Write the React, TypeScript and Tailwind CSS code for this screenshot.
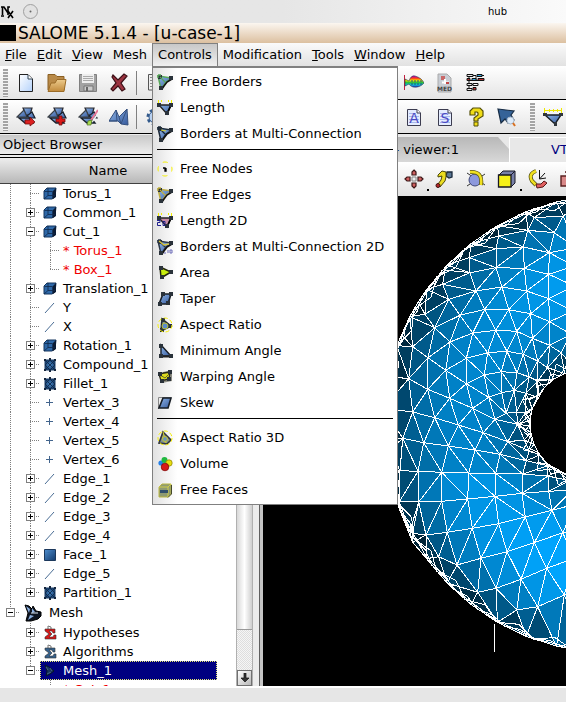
import React from "react";

type P = [number, number];
type IconProps = { size?: number; children?: React.ReactNode };

function Icon({ size = 16, children }: IconProps) {
  return (
    <svg width={size} height={size} viewBox={`0 0 ${size} ${size}`} className="shrink-0" aria-hidden="true">
      {children}
    </svg>
  );
}

function Gradients() {
  return (
    <svg width="0" height="0" className="absolute" aria-hidden="true">
      <defs>
        <linearGradient id="blue" x1="0" y1="0" x2="1" y2="1">
          <stop offset="0" stopColor="#8fb6e8" />
          <stop offset="1" stopColor="#35599c" />
        </linearGradient>
        <linearGradient id="deep" x1="0" y1="0" x2="1" y2="1">
          <stop offset="0" stopColor="#4f8fd0" />
          <stop offset="1" stopColor="#123a6c" />
        </linearGradient>
        <radialGradient id="ball">
          <stop offset="0" stopColor="#4a8ccc" />
          <stop offset="1" stopColor="#173e6c" />
        </radialGradient>
        <linearGradient id="page" x1="0" y1="0" x2="1" y2="1">
          <stop offset="0" stopColor="#ffffff" />
          <stop offset="1" stopColor="#b4d2fb" />
        </linearGradient>
        <linearGradient id="folder" x1="0" y1="0" x2="0" y2="1">
          <stop offset="0" stopColor="#edcb8c" />
          <stop offset="1" stopColor="#c18a3c" />
        </linearGradient>
        <linearGradient id="rainbow" x1="0" y1="0" x2="0" y2="1">
          <stop offset="0" stopColor="#b000d0" />
          <stop offset="0.2" stopColor="#ff3020" />
          <stop offset="0.4" stopColor="#f0e000" />
          <stop offset="0.6" stopColor="#20c040" />
          <stop offset="0.8" stopColor="#10c0e0" />
          <stop offset="1" stopColor="#2020c0" />
        </linearGradient>
      </defs>
    </svg>
  );
}

/* ---------- icons of the Controls menu ---------- */

function Nodes({ at }: { at: P[] }) {
  return (
    <>
      {at.map(([x, y]) => (
        <rect key={`${x}-${y}`} x={x - 2} y={y - 2} width="4" height="4" fill="#2a323a" />
      ))}
    </>
  );
}

function Corner({ edge, mark }: { edge: string; mark?: React.ReactNode }) {
  return (
    <Icon>
      <path d="M1 2L15 4L9 8L7 11L4 15Z" fill="url(#blue)" stroke={edge} strokeWidth="1.5" />
      <path d="M15 5L10 8L7 12L5 15" fill="none" stroke="#111" strokeWidth="1.6" />
      <Nodes at={[[3, 3], [14, 4], [4, 14]]} />
      <path d="M1 1H4M1 1V4M3 3L8 8" fill="none" stroke={edge} strokeWidth="1.3" />
      {mark}
    </Icon>
  );
}

function LengthIcon({ fill = "url(#blue)", mark }: { fill?: string; mark?: React.ReactNode }) {
  return (
    <Icon>
      <path d="M2 5H14L10 14Z" fill={fill} stroke="#222" strokeWidth="1.4" />
      <path d="M14 5L10 14" stroke="#000" strokeWidth="1.8" />
      <path d="M1.500 0V3M4.500 0V2M11.500 0V2M14.500 0V3" stroke="#f4f000" />
      <Nodes at={[[2, 5], [14, 5], [10, 13]]} />
      {mark}
    </Icon>
  );
}

const twoD = <path d="M0 7.500H3V9.500H0.500V12.500H4M6 8.500H8V12.500H6Z" fill="none" stroke="#20208c" />;
const twoDSmall = <path d="M7 14H9M11 11V14M13 11H15V14H13Z" fill="none" stroke="#6a6ab8" />;
const Halo = () => <circle cx="8" cy="8" r="7" fill="none" stroke="#f6f000" strokeDasharray="4 2.300" />;

const icons = {
  freeBorders: <Corner edge="#58a858" />,
  length: <LengthIcon />,
  multi: <Corner edge="#1b2836" mark={<path d="M4 4L9 5" stroke="#d8d030" />} />,
  freeNodes: (
    <Icon>
      <circle cx="8" cy="8" r="7" fill="none" stroke="#f6f000" strokeDasharray="5 6" strokeDashoffset="2.500" />
      <path d="M6 7H8V10H9V7" fill="none" stroke="#000" strokeWidth="1.3" />
    </Icon>
  ),
  freeEdges: <Corner edge="#c0ae40" />,
  length2d: <LengthIcon fill="#c58ba5" mark={twoD} />,
  multi2d: <Corner edge="#2b3646" mark={<>{twoDSmall}<path d="M2 2L7 6L12 5" stroke="#d8c840" fill="none" strokeWidth="1.3" /></>} />,
  area: (
    <Icon>
      <path d="M3 2L14 7L4 13Z" fill="#c8ee10" stroke="#20240a" strokeWidth="1.5" />
      <Nodes at={[[4, 3], [14, 7], [5, 12]]} />
    </Icon>
  ),
  taper: (
    <Icon>
      <path d="M6 3H14L11 13H2Z" fill="url(#blue)" stroke="#161c24" strokeWidth="1.6" />
      <Nodes at={[[6, 3], [14, 3], [11, 12], [3, 13]]} />
    </Icon>
  ),
  aspect: (
    <Icon>
      <path d="M5 2L14 9L4 14Z" fill="#87929a" stroke="#20262c" strokeWidth="1.6" />
      <Nodes at={[[6, 3], [13, 9], [5, 13]]} />
      <circle cx="8" cy="9" r="3" fill="#5b8bcb" stroke="#b9bd30" />
      <Halo />
    </Icon>
  ),
  angle: (
    <Icon>
      <path d="M4 2L14 13H4Z" fill="url(#blue)" stroke="#161c24" strokeWidth="1.4" />
      <path d="M2 13.500H15" stroke="#222" strokeWidth="2" />
      <Nodes at={[[4, 3], [4, 13], [14, 13]]} />
    </Icon>
  ),
  warping: (
    <Icon>
      <path d="M6 3L15 1V12L5 14Z" fill="#8d8d84" />
      <path d="M2 5L7 4L13 3L12 10L4 12Z" fill="#dddb20" stroke="#282818" strokeWidth="1.3" />
      <path d="M3 6L8 9M8 9L13 4" fill="none" stroke="#6a6a20" />
      <Nodes at={[[3, 5], [13, 3], [12, 10], [5, 12]]} />
    </Icon>
  ),
  skew: (
    <Icon>
      <path d="M1.500 14V2.500H14" fill="none" stroke="#888" />
      <path d="M6 3H14L11 13H2Z" fill="url(#blue)" stroke="#161c24" strokeWidth="1.6" />
    </Icon>
  ),
  aspect3d: (
    <Icon>
      <path d="M6 2L14 10L10 14L2 13Z" fill="#7f8f93" stroke="#30343a" strokeWidth="1.6" />
      <path d="M6 2L9 13M5 7L10 9" fill="none" stroke="#d4d020" />
      <circle cx="8" cy="9" r="2.5" fill="#6c97ba" stroke="#c8c430" />
      <Halo />
    </Icon>
  ),
  volume: (
    <Icon>
      <circle cx="4" cy="7" r="2.6" fill="#2580e8" />
      <circle cx="7.5" cy="4" r="3" fill="#20b840" />
      <circle cx="12" cy="7" r="3.2" fill="#e8dc10" stroke="#8a8200" strokeWidth="0.7" />
      <circle cx="8" cy="11" r="3.8" fill="#d81818" stroke="#700" strokeWidth="0.7" />
    </Icon>
  ),
  freeFaces: (
    <Icon>
      <path d="M2 5L5 2H14V12L11 15H2Z" fill="#8e9a72" stroke="#b8b440" />
      <path d="M2 5H11V15M11 5L14 2" fill="none" stroke="#d0cc48" />
      <path d="M3 8H11V11H3Z" fill="#31506c" />
      <path d="M14.500 3V12L11 15.500" fill="none" stroke="#44482a" />
    </Icon>
  ),
};

const menuGroups: { label: string; icon: React.ReactNode }[][] = [
  [
    { label: "Free Borders", icon: icons.freeBorders },
    { label: "Length", icon: icons.length },
    { label: "Borders at Multi-Connection", icon: icons.multi },
  ],
  [
    { label: "Free Nodes", icon: icons.freeNodes },
    { label: "Free Edges", icon: icons.freeEdges },
    { label: "Length 2D", icon: icons.length2d },
    { label: "Borders at Multi-Connection 2D", icon: icons.multi2d },
    { label: "Area", icon: icons.area },
    { label: "Taper", icon: icons.taper },
    { label: "Aspect Ratio", icon: icons.aspect },
    { label: "Minimum Angle", icon: icons.angle },
    { label: "Warping Angle", icon: icons.warping },
    { label: "Skew", icon: icons.skew },
  ],
  [
    { label: "Aspect Ratio 3D", icon: icons.aspect3d },
    { label: "Volume", icon: icons.volume },
    { label: "Free Faces", icon: icons.freeFaces },
  ],
];

/* ---------- toolbar icons ---------- */

function MeshShape({ children, plain }: { children?: React.ReactNode; plain?: boolean }) {
  return (
    <Icon size={20}>
      {plain ? (
        <>
          <path d="M0 14L7 3L10 10L18 2L19 18L12 17L9 14Z" fill="url(#blue)" stroke="#35507e" />
          <path d="M7 3L8 14L0 14M10 10L12 17M18 2L12 17" fill="none" stroke="#35507e" />
        </>
      ) : (
        <>
          <path d="M7 1L16 1L14 8L10 8Z" fill="url(#blue)" stroke="#2a2a30" strokeWidth="1.2" />
          <path d="M1 10L8 3L11 10Z" fill="url(#blue)" stroke="#3a4046" strokeWidth="1.2" />
          <path d="M11 9L16 5L19 11L14 11Z" fill="url(#blue)" stroke="#18202c" strokeWidth="1.2" />
          <path d="M3 11L13 11L17 16L9 16Z" fill="url(#blue)" stroke="#18202c" strokeWidth="1.4" />
        </>
      )}
      {children}
    </Icon>
  );
}

function LetterDoc({ letter }: { letter: string }) {
  return (
    <Icon size={20}>
      <path d="M3.500 2.500H13L16.500 6V18.500H3.500Z" fill="#e4ecff" stroke="#3c3c50" />
      <path d="M13 2.500V6H16.500" fill="#fff" stroke="#3c3c50" />
      <path d="M5 6.500H12M5 9.500H15M5 12.500H15M5 15.500H15" stroke="#a8b8ec" />
      <text x="10" y="16" textAnchor="middle" fontSize="14" fontFamily="DejaVu Sans, sans-serif" fill="#4a4ac4">
        {letter}
      </text>
    </Icon>
  );
}

const fileIcons = [
  { name: "New", icon: <Icon size={20}><path d="M3.500 1.500H12L16.500 6V18.500H3.500Z" fill="url(#page)" stroke="#222" /><path d="M12 2V6H16.500" fill="#fff" stroke="#345" /></Icon> },
  { name: "Open", icon: <Icon size={20}><path d="M1 1.500H8L10 3.500H17V17H1Z" fill="#b98a48" stroke="#8a5f22" /><path d="M1 18.500L4 10H8L10 6.500H19L17 18.500Z" fill="url(#folder)" stroke="#9b6c28" /></Icon> },
  { name: "Save", icon: <Icon size={20}><path d="M1.500 1.500H18.500V18.500H1.500Z" fill="#a2a2a2" stroke="#808080" /><path d="M4 1H16V10H4Z" fill="#eee" /><path d="M5 3.500H15M5 5.500H15M5 7.500H15" stroke="#aaa" /><path d="M6 13H15V18H6Z" fill="#ccc" stroke="#777" /><path d="M8 14H10V18H8Z" fill="#666" /></Icon> },
  { name: "Close", icon: <Icon size={20}><path d="M4 2L9 7L15 1L18 3L12 10L16 16L13 18L9 13L4 18L2 16L7 10L3 4Z" fill="#9c3340" stroke="#3c1016" strokeWidth="1.2" /></Icon> },
];

const meshIcons = [
  { name: "Create Mesh", icon: <MeshShape><path d="M9 13H14V10L19 15L14 19V17H9Z" fill="#dc2020" stroke="#701010" strokeWidth="0.8" /></MeshShape> },
  { name: "Create Sub-mesh", icon: <MeshShape><path d="M12 9H15V12H18V15H15V18H12V15H9V12H12Z" fill="#dc1818" stroke="#701010" strokeWidth="0.8" /></MeshShape> },
  { name: "Edit Mesh", icon: <MeshShape><path d="M20 3L13 13" stroke="#e87898" strokeWidth="2" /><path d="M19 8L14 15" stroke="#f4f4f4" strokeWidth="1.5" /><path d="M10 14L14 13L13 18L9 18Z" fill="#a8dc50" stroke="#507020" strokeWidth="0.7" /></MeshShape> },
  { name: "Build Compound", icon: <MeshShape plain /> },
];

const fish = <Icon size={20}><path d="M0.500 2V17" stroke="#c02040" /><path d="M1 6L5 8Q7 2 11 3Q18 5 20 10Q16 15 9 14Q6 13 5 11L1 13Z" fill="url(#rainbow)" stroke="#273b48" strokeWidth="0.6" /><path d="M7 8H18M7 11H18" stroke="#205080" strokeDasharray="2 1" /></Icon>;
const med = <Icon size={20}><path d="M3 1H12L16 5V19H3Z" fill="#c8cdd4" stroke="#aaa" /><path d="M6 3H10V7H6Z" fill="#c86868" /><path d="M7 9.500H14M10 6V11" stroke="#fff" strokeWidth="2" /><path d="M11 9H14V11H11Z" fill="#c04848" /><text x="9.5" y="18" textAnchor="middle" fontSize="6" fontWeight="bold" fontFamily="DejaVu Sans, sans-serif" fill="#444">MED</text></Icon>;
const blocks = <Icon size={20}><path d="M7 2.500H10M16 2.500H18M3 4V17M3 7.500H12M3 11.500H9M10 3V7" stroke="#111" fill="none" /><path d="M1 1.500H7V3.500H1ZM1 10.500H6V12.500H1ZM1 15.500H6V17.500H1Z" fill="#e8e8e8" stroke="#111" /><path d="M11 1.500H16V3.500H11ZM6 5.500H10V7.500H6Z" fill="#38a8e0" stroke="#111" /><path d="M1 5.500H4V7.500H1ZM12 5.500H18V7.500H12ZM7 14.500H10V17H7Z" fill="#bb3030" stroke="#111" /><path d="M7 10.500H12V12.500H7Z" fill="#fff" stroke="#111" /></Icon>;
const help = <Icon size={20}><path d="M4 8V4L7 1H14L17 4V9L12 12V14H8V11L12 8V6L11 5H9V8Z" fill="#f0dc18" stroke="#55500a" strokeWidth="1.2" /><path d="M8 15H12V19H8Z" fill="#f0dc18" stroke="#55500a" /></Icon>;
const select = <Icon size={20}><path d="M1 2L17 4L14 8L17 13L11 16L8 12L4 16Z" fill="#356398" stroke="#172c44" strokeWidth="1.2" /><circle cx="13.5" cy="13.5" r="3.5" fill="#dcebfa" stroke="#a4b5c8" /><path d="M16 16L18 19" stroke="#d87020" strokeWidth="2" /></Icon>;
const ruler = <Icon size={20}><path d="M2 8H18L12 17Z" fill="url(#blue)" stroke="#161c24" strokeWidth="1.4" /><path d="M1.500 1V6M18.500 1V6M2 3.500H18M6.500 2V5M10.500 2V5M14.500 2V5" stroke="#efe800" /><path d="M0 6H4V9H0ZM16 6H20V9H16ZM11 15H14V19H11Z" fill="#30363c" /></Icon>;
const report = <Icon size={20}><path d="M3.500 1.500H16V17H3.500Z" fill="#eee" stroke="#555" /><path d="M5 4.500H14M5 7.500H14M5 10.500H14M5 13.500H14" stroke="#888" /></Icon>;
const gear = <Icon size={20}><circle cx="10" cy="10" r="7" fill="none" stroke="#335a8c" strokeWidth="3" strokeDasharray="3 2.500" /><circle cx="10" cy="10" r="6" fill="#b8d0f0" stroke="#335a8c" /></Icon>;

const viewIcons = [
  { name: "Dump View", dot: true, icon: <Icon size={20}><path d="M10 1L12 3V6H8V3ZM10 19L12 17V14H8V17ZM1 10L3 8H6V12H3ZM19 10L17 8H14V12H17Z" fill="#d06060" stroke="#3b1818" strokeWidth="1.2" /><path d="M8 8H12V12H8Z" fill="#eee" stroke="#888" /></Icon> },
  { name: "Zoom", icon: <Icon size={20}><path d="M12 3H17V8L14 9L11 7Z" fill="#5c7896" stroke="#1b2a3c" strokeWidth="1.3" /><path d="M3 6L7 2L11 3V8L10 12L5 18L3 15L6 11L7 7L3 8Z" fill="#eadc20" stroke="#4c480a" /><circle cx="3" cy="16.500" r="2" fill="#b42828" stroke="#3c1010" /></Icon> },
  { name: "Rotate", icon: <Icon size={20}><path d="M1 4L19 16M1 17L19 5" stroke="#333" /><circle cx="9" cy="11" r="6" fill="#8c98dc" stroke="#404878" /><path d="M4 3Q17 2 15 16" fill="none" stroke="#5c5610" strokeWidth="4" /><path d="M4 3Q17 2 15 16" fill="none" stroke="#f0e020" strokeWidth="2.5" /></Icon> },
  { name: "Views", dot: true, icon: <Icon size={20}><path d="M2 6L6 2H18V14L14 18Z" fill="#7880a8" stroke="#181824" /><path d="M1.500 6H14V18H1.500Z" fill="#f6f018" stroke="#181824" strokeWidth="1.3" /><path d="M14 6L18 2" stroke="#181824" /></Icon> },
  { name: "Reset", icon: <Icon size={20}><path d="M11.500 1V10L18 9M11.500 10L17 4" fill="none" stroke="#111" /><path d="M8 2Q0 5 4 12L8 16" fill="none" stroke="#504b0a" strokeWidth="4" /><path d="M8 2Q0 5 4 12L8 16" fill="none" stroke="#f0e020" strokeWidth="2.5" /><path d="M8 15L13 15L16 12L19 14L15 18L9 19Z" fill="#e06060" stroke="#581818" /></Icon> },
  { name: "Memorise", icon: <Icon size={20}><path d="M2 7H11V17H2ZM6 3H15V13" fill="#d88888" stroke="#5a2020" strokeWidth="1.4" /></Icon> },
];

function ToolButton({ name, children, dot }: { name: string; children: React.ReactNode; dot?: boolean }) {
  return (
    <button type="button" aria-label={name} className="relative flex h-8 w-[31px] shrink-0 items-center justify-center">
      {children}
      {dot && <span className="absolute right-0 bottom-1 size-[2px] bg-black" />}
    </button>
  );
}

const Handle = () => (
  <span className="flex h-8 w-2.5 shrink-0 items-center justify-center">
    <span className="h-7 w-[5px] bg-[repeating-linear-gradient(180deg,#a4a4a4_0_2px,#f4f4f4_2px_3px)]" />
  </span>
);
const Divider = () => <span className="mx-[2px] h-6 w-px shrink-0 self-center bg-[#808080]" />;

function Toolbars() {
  const bar = "flex h-[34px] items-center overflow-hidden border-b border-black bg-linear-to-b from-white to-[#e4e4e4]";
  return (
    <div className="shrink-0">
      <div role="toolbar" aria-label="File" className={bar}>
        <Handle />
        {fileIcons.map((i) => <ToolButton key={i.name} name={i.name}>{i.icon}</ToolButton>)}
        <Divider />
        <ToolButton name="Report">{report}</ToolButton>
        <span className="w-[228px] shrink-0" />
        <ToolButton name="Post-processing">{fish}</ToolButton>
        <ToolButton name="MED file">{med}</ToolButton>
        <ToolButton name="Supervision">{blocks}</ToolButton>
      </div>
      <div role="toolbar" aria-label="Mesh" className={bar}>
        <Handle />
        {meshIcons.map((i) => <ToolButton key={i.name} name={i.name}>{i.icon}</ToolButton>)}
        <Divider />
        <ToolButton name="Compute">{gear}</ToolButton>
        <span className="w-[228px] shrink-0" />
        <ToolButton name="Advanced information"><LetterDoc letter="A" /></ToolButton>
        <ToolButton name="Standard information"><LetterDoc letter="S" /></ToolButton>
        <ToolButton name="Element information">{help}</ToolButton>
        <ToolButton name="Find element">{select}</ToolButton>
        <span className="w-[5px] shrink-0" />
        <Handle />
        <ToolButton name="Length control">{ruler}</ToolButton>
      </div>
    </div>
  );
}

/* ---------- object browser ---------- */

type Kind = "solid" | "line" | "compound" | "vertex" | "face" | "hyp" | "algo" | "submesh";
type Node = { label: string; kind?: Kind; level: 1 | 2; open?: boolean; leaf?: boolean; last?: boolean };

const nodes: Node[] = [
  { label: "Torus_1", kind: "solid", level: 1, leaf: true },
  { label: "Common_1", kind: "solid", level: 1 },
  { label: "Cut_1", kind: "solid", level: 1, open: true },
  { label: "* Torus_1", level: 2 },
  { label: "* Box_1", level: 2, last: true },
  { label: "Translation_1", kind: "solid", level: 1 },
  { label: "Y", kind: "line", level: 1, leaf: true },
  { label: "X", kind: "line", level: 1, leaf: true },
  { label: "Rotation_1", kind: "solid", level: 1 },
  { label: "Compound_1", kind: "compound", level: 1 },
  { label: "Fillet_1", kind: "compound", level: 1 },
  { label: "Vertex_3", kind: "vertex", level: 1, leaf: true },
  { label: "Vertex_4", kind: "vertex", level: 1, leaf: true },
  { label: "Vertex_5", kind: "vertex", level: 1, leaf: true },
  { label: "Vertex_6", kind: "vertex", level: 1, leaf: true },
  { label: "Edge_1", kind: "line", level: 1 },
  { label: "Edge_2", kind: "line", level: 1 },
  { label: "Edge_3", kind: "line", level: 1 },
  { label: "Edge_4", kind: "line", level: 1 },
  { label: "Face_1", kind: "face", level: 1 },
  { label: "Edge_5", kind: "line", level: 1 },
  { label: "Partition_1", kind: "compound", level: 1, last: true },
];

const sigma = (c: string) => (
  <Icon><path d="M6 4V1L9 2V5" fill="none" stroke="#777" /><path d="M3 4H13V8H11L10 6H7L10 9L7 12H11L12 10H14V14H3V12L7 9L3 6Z" fill={c} stroke="#333" strokeWidth="0.6" /></Icon>
);

const treeIcons: Record<Kind, React.ReactNode> = {
  solid: <Icon><path d="M2 5L5 2H14L13 11L10 13H2Z" fill="#2e68a8" stroke="#14345c" strokeLinejoin="round" /><path d="M11 5L14 2V11L11 13Z" fill="#0c1c34" /><path d="M2.500 5.500H10.500V13M6 2V9.500H13M2 13L6 9.500" fill="none" stroke="#10284a" strokeWidth="0.8" /></Icon>,
  line: <Icon><path d="M3 13L12 3" stroke="#4a6d94" /></Icon>,
  compound: <Icon><path d="M3 3H13V13H3Z" fill="url(#ball)" stroke="#1c3f68" /><path d="M3 8L8 3L13 8L8 13ZM3 3L13 13M13 3L3 13" fill="none" stroke="#10284a" strokeWidth="0.9" /><path d="M2 2H4V4H2ZM12 2H14V4H12ZM2 12H4V14H2ZM12 12H14V14H12ZM7 1H9V3H7ZM7 13H9V15H7Z" fill="#14253c" /></Icon>,
  vertex: <Icon><path d="M7.500 4V11M4 7.500H11" stroke="#43658d" /></Icon>,
  face: <Icon><path d="M2.500 2.500H13.500V13.500H2.500Z" fill="url(#deep)" stroke="#1c385c" /></Icon>,
  hyp: sigma("#d81818"),
  algo: sigma("#36618c"),
  submesh: <Icon><path d="M3 2L7 4L12 8L8 11L4 13L5 8Z" fill="#17335c" stroke="#061428" /><path d="M4 4L6 7M8 5L10 8M5 11L9 9" fill="none" stroke="#50708e" strokeWidth="0.8" /></Icon>,
};

/** One 20px wide cell of the branch lines to the left of a tree row. */
function Guide({ up, down, side, box, h = 19 }: { up?: boolean; down?: boolean; side?: boolean; box?: "+" | "-"; h?: number }) {
  const m = Math.floor(h / 2);
  return (
    <svg width="20" height={h} className="shrink-0" shapeRendering="crispEdges" aria-hidden="true">
      <g stroke="#808080" strokeDasharray="1 1">
        {up && <path d={`M10.500 0V${m + 1}`} />}
        {down && <path d={`M10.500 ${m + 1}V${h}`} />}
        {side && <path d={`M10 ${m + 0.5}H19`} />}
      </g>
      {box && (
        <>
          <rect x="6.500" y={m - 3.5} width="8" height="8" fill="#fff" stroke="#808080" />
          <path d={`M8 ${m + 0.5}H13`} stroke="#000" />
          {box === "+" && <path d={`M10.500 ${m - 2}V${m + 3}`} stroke="#000" />}
        </>
      )}
    </svg>
  );
}

function TreeRow({ n }: { n: Node }) {
  return (
    <li role="treeitem" className="flex h-[19px] items-center whitespace-nowrap">
      <Guide up down />
      {n.level === 1 ? (
        <>
          <Guide up down={!n.last} side box={n.leaf ? undefined : n.open ? "-" : "+"} />
          <span className="flex w-[23px] shrink-0 pl-0.5">{n.kind && treeIcons[n.kind]}</span>
          {n.label}
        </>
      ) : (
        <>
          <Guide up down />
          <Guide up down={!n.last} side />
          <span className="pl-[3px] text-[#f00000]">{n.label}</span>
        </>
      )}
    </li>
  );
}

function ObjectBrowser() {
  return (
    <section aria-label="Object Browser" className="flex w-[259px] shrink-0 flex-col bg-[#ececec]">
      <h2 className="mt-px flex h-5 shrink-0 items-center border-b border-black bg-linear-to-b from-[#c8c8c8] to-[#eeeeee] pl-[3px]">Object Browser</h2>
      <div className="mt-0.5 flex min-h-0 flex-1 flex-col border-t border-black">
        <div className="mr-1.5 flex h-[26px] shrink-0 border-b border-[#404040] bg-linear-to-b from-[#eeeeee] to-[#b8b8b8]">
          <span className="flex w-[217px] items-center justify-center border-r border-[#888]">Name</span>
        </div>
        <div className="flex min-h-0 flex-1">
          <ul role="tree" className="min-w-0 flex-1 overflow-hidden bg-white">
            {nodes.map((n, i) => <TreeRow key={i} n={n} />)}
            <li role="treeitem" className="flex h-[21px] items-center">
              <Guide up side box="-" h={21} />
              <span className="flex w-[29px] shrink-0 pl-1">
                <Icon size={20}>
                  <path d="M1 2L5 3L8 6L9 3L12 8L17 9V13L14 16L7 18L2 18L4 10Z" fill="#0c1420" stroke="#000" />
                  <path d="M2 3L6 6L5 10ZM8 5L11 9L8 10ZM4 17L6 12L10 13Z" fill="#8cb0e0" />
                  <path d="M7 10L14 10" stroke="#dde8f4" />
                </Icon>
              </span>
              Mesh
            </li>
            <li role="treeitem" className="flex h-[19px] items-center">
              <span className="w-5" /><Guide up down side box="+" />
              <span className="flex w-[23px] shrink-0 pl-0.5">{treeIcons.hyp}</span>Hypotheses
            </li>
            <li role="treeitem" className="flex h-[19px] items-center">
              <span className="w-5" /><Guide up down side box="+" />
              <span className="flex w-[23px] shrink-0 pl-0.5">{treeIcons.algo}</span>Algorithms
            </li>
            <li role="treeitem" aria-selected="true" className="flex h-[19px] items-center">
              <span className="w-5" /><Guide up side box="-" />
              <span className="flex h-[19px] w-[177px] items-center border border-dotted border-[#e8e870] bg-[#000080] text-white">
                <span className="flex w-[22px] shrink-0 pl-px">{treeIcons.submesh}</span>Mesh_1
              </span>
            </li>
            <li role="treeitem" className="flex h-[19px] items-center text-[#f00000]">
              <span className="w-10" /><Guide up down side /><span className="pl-[3px]">* Cut_1</span>
            </li>
          </ul>
          <div className="mr-1.5 flex w-[17px] shrink-0 flex-col border-x border-[#b0b0b0] bg-[repeating-conic-gradient(#dedede_0_25%,#f6f6f6_0_50%)] bg-[length:2px_2px]">
            <div className="flex-1 border-b border-[#999] bg-linear-to-r from-[#d8d8d8] via-white to-[#cfcfcf]" />
            <div className="h-10" />
            <button type="button" aria-label="Scroll down" className="flex h-4 items-center justify-center border border-[#707070] bg-linear-to-br from-white to-[#b8b8b8]">
              <svg width="10" height="10" viewBox="0 0 10 10"><path d="M4 0H6V5H9L5 9L1 5H4Z" fill="#333" stroke="#111" strokeWidth="0.7" /></svg>
            </button>
          </div>
        </div>
      </div>
    </section>
  );
}

/* ---------- torus mesh ---------- */

const upper: P[] = [
  [67, 318], [87, 355], [18, 418], [116, 395], [50, 452], [158, 310], [192, 358], [140, 265], [222, 230], [240, 285], [147, 222],
  [220, 185], [300, 215], [318, 273], [385, 217], [392, 285], [300, 158], [308, 120], [382, 153], [460, 170], [458, 235],
  [395, 103], [475, 110], [415, 65], [502, 60], [458, 308], [266, 340], [338, 341], [404, 353], [461, 377], [230, 411], [299, 403],
  [362, 406], [409, 427], [461, 448], [495, 470], [162, 438], [275, 470], [333, 466], [382, 475], [425, 495], [455, 515],
  [96, 485], [211, 487], [149, 523], [316, 527], [363, 530], [400, 543], [425, 555], [265, 537], [211, 563], [38, 548], [95, 580],
  [161, 607], [278, 604], [317, 590], [355, 583], [390, 592], [330, 652], [230, 637], [50, 648], [116, 665], [187, 687],
  [297, 670], [362, 648], [388, 650], [400, 690], [262, 710], [365, 685], [540, 155], [535, 210], [535, 270], [530, 345], [525, 415],
];
const lower: P[] = [
  [20, 25], [83, 38], [157, 48], [237, 60], [312, 73], [391, 92], [455, 107], [335, 35], [400, 62], [385, 30],
  [12, 122], [66, 124], [137, 127], [218, 129], [299, 130], [380, 132], [456, 138], [520, 152], [10, 215], [68, 216], [137, 214],
  [215, 207], [297, 199], [378, 190], [458, 184], [530, 180], [50, 310], [90, 315], [154, 307], [229, 295], [308, 281], [388, 261],
  [468, 241], [540, 222], [183, 405], [255, 385], [333, 365], [415, 338], [500, 308], [128, 380], [300, 475], [375, 448],
  [452, 415], [535, 385], [245, 487], [425, 530], [505, 495], [362, 540], [50, 337], [-18, 60], [-18, 150], [580, 480], [590, 290],
];
const outer = { x: 612, y: 424, r: 229 };
const inner = { x: 584, y: 424, r: 54 };

function rim(c: { x: number; y: number; r: number }, step: number, shift = 0): P[] {
  const out: P[] = [];
  for (let a = 80 + shift; a <= 280; a += step) {
    const t = (a * Math.PI) / 180;
    out.push([c.x + c.r * Math.cos(t) + shift * 0.01, c.y + c.r * Math.sin(t)]);
  }
  return out;
}

/** Bowyer-Watson triangulation; returns index triples. */
function triangulate(pts: P[]): number[][] {
  const n = pts.length;
  const all: P[] = [...pts, [-5000, -5000], [6000, -5000], [500, 9000]];
  const circle = (t: number[]) => {
    const [[ax, ay], [bx, by], [cx, cy]] = t.map((i) => all[i]);
    const d = 2 * (ax * (by - cy) + bx * (cy - ay) + cx * (ay - by));
    const a2 = ax * ax + ay * ay, b2 = bx * bx + by * by, c2 = cx * cx + cy * cy;
    const x = (a2 * (by - cy) + b2 * (cy - ay) + c2 * (ay - by)) / d;
    const y = (a2 * (cx - bx) + b2 * (ax - cx) + c2 * (bx - ax)) / d;
    return { t, x, y, r: (ax - x) ** 2 + (ay - y) ** 2 };
  };
  let tris = [circle([n, n + 1, n + 2])];
  for (let i = 0; i < n; i++) {
    const [x, y] = pts[i];
    const bad = tris.filter((c) => (c.x - x) ** 2 + (c.y - y) ** 2 < c.r);
    const edges = new Map<string, number[]>();
    bad.forEach(({ t }) =>
      [[t[0], t[1]], [t[1], t[2]], [t[2], t[0]]].forEach((e) => {
        const key = e[0] < e[1] ? `${e[0]}_${e[1]}` : `${e[1]}_${e[0]}`;
        if (edges.has(key)) edges.delete(key);
        else edges.set(key, e);
      }),
    );
    tris = tris.filter((c) => !bad.includes(c));
    edges.forEach((e) => tris.push(circle([e[0], e[1], i])));
  }
  return tris.map((c) => c.t).filter((t) => t.every((i) => i < n));
}

const vertices: P[] = [
  ...upper.map(([x, y]): P => [396 + x / 3, 196 + y / 3]),
  ...lower.map(([x, y]): P => [396 + x / 3, 430 + y / 3]),
  ...rim(outer, 8),
  ...rim(inner, 13),
];

const faces = triangulate(vertices)
  .map((t) => {
    const p = t.map((i) => vertices[i]);
    const x = (p[0][0] + p[1][0] + p[2][0]) / 3;
    const y = (p[0][1] + p[1][1] + p[2][1]) / 3;
    const di = Math.hypot(x - inner.x, y - inner.y) - inner.r;
    const dout = outer.r - Math.hypot(x - outer.x, y - outer.y);
    const s = Math.min(1, Math.max(0, di / (di + dout)));
    const bump = Math.pow(Math.max(0, 4 * s * (1 - s)), 0.55);
    const side = Math.min(1, Math.max(0, (x - 390) / 170));
    const b = bump * (0.7 + 0.25 * side + (y > 470 ? 0.08 : 0));
    const k = Math.max(0.18, Math.min(1, b));
    return { d: `M${p.map((q) => q.map((v) => v.toFixed(1)).join(" ")).join("L")}Z`, di, dout, fill: `rgb(0,${Math.round(164 * k)},${Math.round(252 * k)})` };
  })
  .filter((f) => f.di > -1 && f.dout > -1);

/** Steep faces seen edge-on: long thin zigzags that follow the silhouette. */
function zigzag(c: { x: number; y: number; r: number }, step: number, depth: number, start: number) {
  const pts: string[] = [];
  for (let a = start, i = 0; a <= 284; a += step, i++) {
    const t = (a * Math.PI) / 180;
    const r = c.r + (i % 2 ? depth : 0);
    pts.push(`${(c.x + r * Math.cos(t)).toFixed(1)} ${(c.y + r * Math.sin(t)).toFixed(1)}`);
  }
  return `M${pts.join("L")}`;
}
const slivers = [
  zigzag(outer, 4, -4, 78),
  zigzag(outer, 5, -8, 80),
  zigzag({ ...outer, r: 227 }, 6, 1, 79),
  zigzag(inner, 8, 6, 84),
  zigzag(inner, 11, 12, 80),
];

function Viewer() {
  return (
    <section aria-label="Viewer" className="flex min-w-0 flex-1 flex-col border-l border-[#606060] bg-[#e8e8e8]">
      <div role="tablist" className="mt-[3px] flex h-[25px] shrink-0 overflow-hidden">
        <button role="tab" className="w-[249px] shrink-0 bg-linear-to-b from-[#b8b8b8] to-[#d8d8d8] pr-[50px] text-right [clip-path:polygon(0_0,238px_0,100%_12px,100%_100%,0_100%)]">
          OCC scene:1 - viewer:1
        </button>
        <button role="tab" aria-selected="true" className="flex-1 border-t border-l border-white pl-[41px] text-left whitespace-nowrap text-[#000080]">
          VTK scene:2
        </button>
      </div>
      <div role="toolbar" aria-label="View" className="flex h-[34px] shrink-0 items-center overflow-hidden bg-linear-to-b from-white to-[#e2e2e2] pl-[138px]">
        {viewIcons.map((i) => <ToolButton key={i.name} name={i.name} dot={i.dot}>{i.icon}</ToolButton>)}
      </div>
      <div className="min-h-0 flex-1 border-l-3 border-[#c4c4c4] bg-black">
        <svg viewBox="263 196 303 490" preserveAspectRatio="xMinYMin slice" className="block h-full w-full" role="img" aria-label="Triangulated torus">
          <g stroke="#fff" strokeWidth="1" strokeLinejoin="round" shapeRendering="crispEdges">
            {faces.map((f, i) => <path key={i} d={f.d} fill={f.fill} />)}
            {slivers.map((d, i) => <path key={i} d={d} fill="none" />)}
            <path d="M494.500 624V652" />
          </g>
        </svg>
      </div>
    </section>
  );
}

/* ---------- window ---------- */

const menus = ["File", "Edit", "View", "Mesh", "Controls", "Modification", "Tools", "Window", "Help"];
const accel = ["File", "Edit", "View", "Tools", "Window", "Help"];

function ControlsMenu() {
  return (
    <div role="menu" aria-label="Controls" className="absolute top-full -left-px z-10 w-[246px] border border-t-2 border-[#808080] bg-linear-to-r from-[#e2e2e2] via-white via-10% to-white pt-px pb-px">
      {menuGroups.map((group, g) => (
        <div key={g}>
          {g > 0 && <div role="separator" className="h-[9px] px-1 pt-[2px]"><span className="block h-px w-full bg-black" /></div>}
          {group.map((m) => (
            <button key={m.label} role="menuitem" type="button" className="flex h-[26px] w-full items-center gap-[7px] pl-1 text-left whitespace-nowrap">
              {m.icon}
              {m.label}
            </button>
          ))}
        </div>
      ))}
    </div>
  );
}

export default function App() {
  return (
    <div className="flex h-screen flex-col overflow-hidden bg-[#e6e6e6] font-['DejaVu_Sans',sans-serif] text-[13px] leading-4 text-black">
      <Gradients />
      <header className="flex h-[23px] shrink-0 items-center bg-linear-to-r from-[#e6e6e6] from-50% to-[#fafafa] text-[10px]">
        <svg width="40" height="22" viewBox="0 0 40 22" aria-hidden="true">
          <path d="M1 6H4L8 12V6H10M2.500 6V14M1 15H4M8 12V14M8 10L13 17M13 10L8 17" fill="none" stroke="#000" strokeWidth="1.600" />
          <circle cx="30.500" cy="10.500" r="7" fill="#e2e2e2" stroke="#a0a0a0" />
          <circle cx="30.500" cy="10.500" r="1" fill="#666" />
        </svg>
        <span className="ml-auto w-[78px]">hub</span>
      </header>
      <h1 className="flex h-5 shrink-0 items-center gap-0.5 bg-linear-to-b from-[#fbf6f0] to-[#dcc0a0] text-[17px]">
        <span className="size-4 bg-black" />
        SALOME 5.1.4 - [u-case-1]
      </h1>
      <nav role="menubar" className="relative flex h-[23px] shrink-0 items-stretch bg-linear-to-b from-[#fafafa] to-[#e2e2e2]">
        {menus.map((m) => (
          <div key={m} className={m === "Controls" ? "relative border-x border-t border-[#808080] bg-linear-to-b from-[#c8c8c8] to-[#f0f0f0]" : ""}>
            <button type="button" role="menuitem" className="h-full px-[5px]">
              {accel.includes(m) ? <><u>{m[0]}</u>{m.slice(1)}</> : m}
            </button>
            {m === "Controls" && <ControlsMenu />}
          </div>
        ))}
      </nav>
      <Toolbars />
      <main className="flex min-h-0 flex-1">
        <ObjectBrowser />
        <Viewer />
      </main>
      <footer className="h-4 shrink-0 border-t-2 border-white bg-[#e6e6e6]" />
    </div>
  );
}
